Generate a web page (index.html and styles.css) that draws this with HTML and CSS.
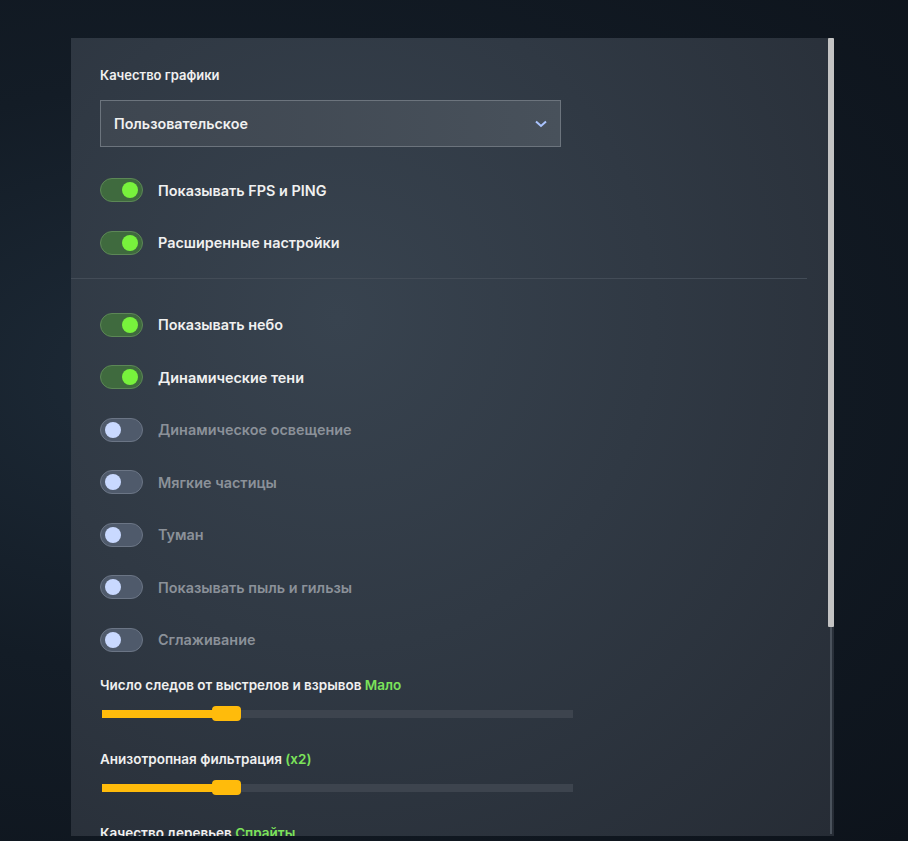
FILE: index.html
```html
<!DOCTYPE html>
<html lang="ru">
<head>
  <meta charset="UTF-8">
  <meta name="viewport" content="width=device-width, initial-scale=1.0">
  <title>Настройки графики</title>
  <link rel="stylesheet" href="styles.css">
</head>
<body>
  <div class="panel">
    <div class="panel-inner">
      <div class="field-title">Качество графики</div>
      <div class="select">
        <span>Пользовательское</span>
        <svg class="chevron" width="12" height="8" viewBox="0 0 12 8">
          <path d="M1 1.5 L6 6 L11 1.5" fill="none" stroke="#aac4ff" stroke-width="2"/>
        </svg>
      </div>

      <div class="toggles first">
        <div class="toggle-row on"><span class="switch"><span class="knob"></span></span><span class="label">Показывать FPS и PING</span></div>
        <div class="toggle-row on"><span class="switch"><span class="knob"></span></span><span class="label">Расширенные настройки</span></div>
      </div>

      <div class="divider"></div>

      <div class="toggles">
        <div class="toggle-row on"><span class="switch"><span class="knob"></span></span><span class="label">Показывать небо</span></div>
        <div class="toggle-row on"><span class="switch"><span class="knob"></span></span><span class="label">Динамические тени</span></div>
        <div class="toggle-row"><span class="switch"><span class="knob"></span></span><span class="label">Динамическое освещение</span></div>
        <div class="toggle-row"><span class="switch"><span class="knob"></span></span><span class="label">Мягкие частицы</span></div>
        <div class="toggle-row"><span class="switch"><span class="knob"></span></span><span class="label">Туман</span></div>
        <div class="toggle-row"><span class="switch"><span class="knob"></span></span><span class="label">Показывать пыль и гильзы</span></div>
        <div class="toggle-row"><span class="switch"><span class="knob"></span></span><span class="label">Сглаживание</span></div>
      </div>

      <div class="slider-group">
        <div class="slider-label">Число следов от выстрелов и взрывов <span class="value">Мало</span></div>
        <div class="slider"><div class="fill" style="width: 125px"></div><div class="thumb" style="left: 110px"></div></div>
      </div>
      <div class="slider-group">
        <div class="slider-label">Анизотропная фильтрация <span class="value">(x2)</span></div>
        <div class="slider"><div class="fill" style="width: 125px"></div><div class="thumb" style="left: 110px"></div></div>
      </div>
      <div class="slider-group">
        <div class="slider-label">Качество деревьев <span class="value">Спрайты</span></div>
        <div class="slider"><div class="fill" style="width: 125px"></div><div class="thumb" style="left: 110px"></div></div>
      </div>
    </div>
    <!-- scrollbar drawn over the panel edge -->
    <div class="scrollbar"><div class="scroll-thumb"></div></div>
  </div>
</body>
</html>
```

FILE: styles.css
```css
html, body {
  height: 100%;
}

body {
  margin: 0;
  padding: 38px 0 0 71px;
  box-sizing: border-box;
  font-family: Inter, "Noto Sans", sans-serif;
  background: radial-gradient(ellipse at 20% 45%, #1e2b38 0%, #131c26 45%, #0d131b 100%);
  overflow: hidden;
}

.panel {
  position: relative;
  width: 763px;
  height: 798px;
  overflow: hidden;
  background: radial-gradient(ellipse at 35% 35%, #38434f 0%, #303944 45%, #262c35 100%);
}

.scrollbar {
  position: absolute;
  top: 0;
  right: 0;
  bottom: 2px;
  width: 6px;
  background: linear-gradient(to right, transparent 2px, #4a525c 2px, #4a525c 4px, transparent 4px);
}

.scroll-thumb {
  height: 589px;
  background: #c3c3c3;
  border-radius: 1px;
}

.panel-inner {
  padding: 28px 28px 40px 29px;
}

.field-title {
  font-size: 13px;
  font-weight: 600;
  line-height: 18px;
  color: #f0f0f0;
}

.select {
  margin-top: 16px;
  height: 45px;
  border: 1px solid #6c747d;
  background: linear-gradient(to right, #3e4650, #48515b);
  display: flex;
  align-items: center;
  justify-content: space-between;
  padding: 0 13px;
  width: 433px;
  font-size: 14.3px;
  font-weight: 600;
  color: #f0f0f0;
}

.chevron {
  margin-top: 1px;
}

.toggles {
  display: flex;
  flex-direction: column;
}

.toggles.first {
  margin-top: 17px;
}

.toggle-row {
  display: flex;
  align-items: center;
  height: 24px;
  padding: 14.25px 0;
}

.switch {
  width: 41px;
  height: 22px;
  border-radius: 12px;
  border: 1px solid #6b7585;
  background: #4f5a6b;
  position: relative;
  flex-shrink: 0;
}

.knob {
  position: absolute;
  top: 3px;
  left: 4px;
  width: 16px;
  height: 16px;
  border-radius: 50%;
  background: #c9d9ff;
}

.toggle-row.on .switch {
  background: #3f6a3e;
  border-color: #5c8756;
}

.toggle-row.on .knob {
  left: 21px;
  background: #78f23c;
}

.label {
  margin-left: 15px;
  font-size: 14.4px;
  font-weight: 600;
  color: #8b9199;
}

.toggle-row.on .label {
  color: #f0f0f0;
}

.divider {
  height: 1px;
  background: #434c57;
  margin: 8.5px -1px 20px -29px;
}

.slider-group {
  margin-top: 32px;
}

.toggles + .slider-group {
  margin-top: 10px;
}

.slider-label {
  font-size: 13.5px;
  font-weight: 600;
  line-height: 18px;
  color: #f0f0f0;
}

.value {
  color: #7ce35a;
}

.slider {
  position: relative;
  margin: 16px 0 0 2px;
  width: 471px;
  height: 8px;
  background: #3d444e;
}

.fill {
  height: 100%;
  background: #ffbb0b;
}

.thumb {
  position: absolute;
  top: -4px;
  width: 29px;
  height: 15px;
  border-radius: 4px;
  background: #ffbb0b;
}
```
